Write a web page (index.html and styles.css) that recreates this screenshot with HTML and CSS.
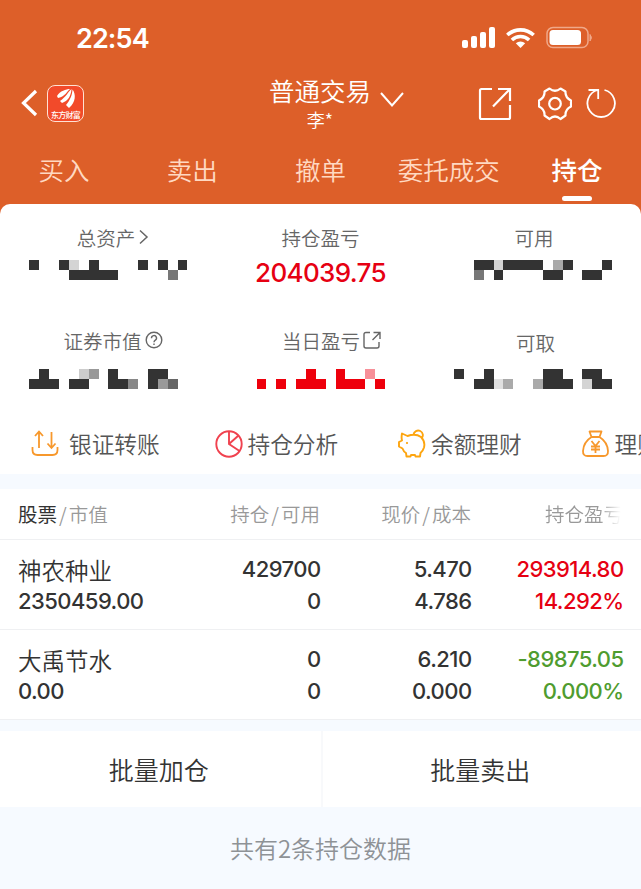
FILE: index.html
```html
<!DOCTYPE html>
<html lang="zh-CN">
<head>
    <meta charset="UTF-8">
    <meta name="viewport" content="width=device-width, initial-scale=1.0">
    <title>普通交易 - 持仓</title>
    <link rel="stylesheet" href="styles.css">
</head>
<body>
    <header class="header">
        <div class="status-bar">
            <span class="time">22:54</span>
            <svg class="status-icons" width="134" height="24" viewBox="0 0 134 24">
                <g fill="#fff">
                    <rect x="2" y="14" width="6" height="8" rx="2"/>
                    <rect x="11" y="10" width="6" height="12" rx="2"/>
                    <rect x="20" y="6" width="6" height="16" rx="2"/>
                    <rect x="29" y="1" width="6" height="21" rx="2"/>
                    <path d="M60.500 22l-4.700-4.700a7 7 0 0 1 9.400 0z"/>
                    <rect x="89.500" y="4" width="31.500" height="15" rx="3.500"/>
                </g>
                <path d="M47.300 9a19.500 19.500 0 0 1 26.400 0M51.900 14a12.500 12.500 0 0 1 17.200 0" fill="none" stroke="#fff" stroke-width="3.600"/>
                <rect x="87" y="1.500" width="41" height="20" rx="6" fill="none" stroke="#f0a889" stroke-width="1.500"/>
                <path d="M130 8.500q3 3 0 6.500z" fill="#f0a889" stroke="#f0a889"/>
            </svg>
        </div>
        <div class="nav-bar">
            <div class="nav-left">
                <svg width="18" height="30" viewBox="0 0 18 30"><path d="M16 3L3.500 15 16 27" fill="none" stroke="#fff" stroke-width="3.200"/></svg>
                <div class="app-logo">
                    <svg width="22" height="20" viewBox="0 0 22 20">
                        <path d="M2 8C5 3 11 1 15 1C11 4 11 8 3 10zM5 13C11 9 13 4 16.500 1C16 8 13 13 7 15zM11 17C15 12 17 8 17.500 1.500C21 6 21 14 14 20z" fill="#fff"/>
                    </svg>
                    <span>东方财富</span>
                </div>
            </div>
            <div class="nav-title">
                <h1>普通交易</h1>
                <p>李*</p>
            </div>
            <svg class="title-arrow" width="24" height="18" viewBox="0 0 24 18"><path d="M1 2l11 12.500L23 2" fill="none" stroke="#fff" stroke-width="2"/></svg>
            <div class="nav-actions">
                <svg width="34" height="36" viewBox="0 0 34 36" fill="none" stroke="#fff" stroke-width="2.200">
                    <path d="M14 3H3.500q-1.500 0-1.500 1.500v27q0 1.500 1.500 1.500h27q1.500 0 1.500-1.500V19M20 3h12v12M32 3L15 20.500"/>
                </svg>
                <svg width="34" height="36" viewBox="0 0 34 36" fill="none" stroke="#fff" stroke-width="2.200">
                    <path d="M11.500 2.500Q17 7 22.500 2.500L27.500 5.500Q27 11.500 33 14.500V20.500Q27 23.500 27.500 29.500L22.500 33Q17 28 11.500 33L6.500 29.500Q7 23.500 1 20.500V14.500Q7 11.500 6.500 5.500z" stroke-linejoin="round"/>
                    <circle cx="17" cy="17.700" r="5.800"/>
                </svg>
                <svg width="32" height="36" viewBox="0 0 32 36" fill="none" stroke="#fff" stroke-width="1.800">
                    <path d="M18.500 4A13.700 13.700 0 1 1 11.800 4M2.500 4h9.700v9"/>
                </svg>
            </div>
        </div>
        <nav class="tabs">
            <a>买入</a>
            <a>卖出</a>
            <a>撤单</a>
            <a>委托成交</a>
            <a class="active">持仓</a>
        </nav>
    </header>

    <section class="summary">
        <div class="summary-grid">
            <div class="cell shifted">
                <div class="label">总资产<svg width="11" height="16" viewBox="0 0 11 16"><path d="M2 1.500L9 8l-7 6.500" fill="none" stroke="#666" stroke-width="1.500"/></svg></div>
                <svg class="mosaic" viewBox="0 0 214 20">
                    <path d="M29 0h10v10H29zM59 0h10v10H59zM89 0h10v10H89zM138 0h10v10h-10zM158 0h10v10h-10zM178 0h9v10h-9zM69 10h49v10H69z" fill="#333"/>
                    <path d="M69 0h10v10H69z" fill="#d4d4d4"/><path d="M168 10h10v10h-10z" fill="#777"/>
                </svg>
            </div>
            <div class="cell">
                <div class="label">持仓盈亏</div>
                <div class="amount">204039.75</div>
            </div>
            <div class="cell">
                <div class="label">可用</div>
                <svg class="mosaic" viewBox="427 0 214 20">
                    <path d="M474 0h20v10h-20zM503 0h40v10h-40zM563 0h10v10h-10zM602 0h10v10h-10zM494 10h9v10h-9zM543 10h20v10h-20zM582 10h20v10h-20z" fill="#333"/>
                    <path d="M494 0h9v10h-9z" fill="#d4d4d4"/><path d="M553 0h10v10h-10z" fill="#aaa"/><path d="M474 10h10v10h-10z" fill="#777"/>
                </svg>
            </div>
            <div class="cell shifted">
                <div class="label">证券市值<svg width="18" height="18" viewBox="0 0 18 18" fill="none" stroke="#666" stroke-width="1.400"><circle cx="9" cy="9" r="7.800"/><path d="M6.500 7.200a2.500 2.500 0 1 1 3.800 2q-1.300.8-1.300 2M9 12.500v1.600"/></svg></div>
                <svg class="mosaic" viewBox="0 0 214 20">
                    <path d="M39 0h10v10H39zM108 0h10v10h-10zM148 0h20v10h-20zM29 10h30v10H29zM69 10h20v10H69zM108 10h20v10h-20zM148 10h10v10h-10z" fill="#333"/>
                    <path d="M79 0h10v10H79z" fill="#ccc"/><path d="M89 0h10v10H89zM158 10h10v10h-10z" fill="#999"/><path d="M128 10h10v10h-10z" fill="#888"/><path d="M168 10h10v10h-10z" fill="#666"/>
                </svg>
            </div>
            <div class="cell today">
                <div class="label">当日盈亏<svg width="18" height="18" viewBox="0 0 18 18" fill="none" stroke="#666" stroke-width="1.400"><path d="M7 1.500H3q-2 0-2 2V15q0 2 2 2h11q2 0 2-2v-4M10.500 1.500H17V8M16.500 2l-7 7"/></svg></div>
                <svg class="mosaic" viewBox="214 0 213 20">
                    <path d="M306 0h10v10h-10zM336 0h9v10h-9zM257 10h9v10h-9zM276 10h10v10h-10zM296 10h30v10h-30zM336 10h29v10h-29zM375 10h10v10h-10z" fill="#ee000c"/>
                    <path d="M365 0h10v10h-10z" fill="#f79099"/>
                </svg>
            </div>
            <div class="cell withdraw">
                <div class="label">可取</div>
                <svg class="mosaic" viewBox="427 0 214 20">
                    <path d="M454 0h10v10h-10zM484 0h10v10h-10zM543 0h20v10h-20zM582 0h20v10h-20zM474 10h20v10h-20zM543 10h30v10h-30zM592 10h20v10h-20z" fill="#333"/>
                    <path d="M494 10h9v10h-9z" fill="#e0e0e0"/><path d="M503 10h10v10h-10zM533 10h10v10h-10z" fill="#aaa"/><path d="M582 10h10v10h-10z" fill="#d4d4d4"/>
                </svg>
            </div>
        </div>
        <div class="shortcuts">
            <a>
                <svg width="30" height="30" viewBox="0 0 30 30" fill="none" stroke="#f7982c" stroke-width="1.800"><path d="M9 19V3M5 7l4-4.500L13 7M21.500 3v15.500M17.500 14.500l4 4.500 4-4.500M2.500 18v3q0 5 5 5h15q5 0 5-5v-3"/></svg>
                <span>银证转账</span>
            </a>
            <a>
                <svg width="30" height="30" viewBox="0 0 30 30" fill="none" stroke="#f0424f" stroke-width="1.900"><circle cx="15" cy="15" r="12.700"/><path d="M15 2.500V15l10.500 7M15 15l9.500-8.500"/></svg>
                <span>持仓分析</span>
            </a>
            <a>
                <svg width="30" height="30" viewBox="0 0 30 30" fill="none" stroke="#fda50f" stroke-width="1.900" stroke-linejoin="round"><path d="M5 4.500l5.500 2.500q8-3 13.500 1 4.500 4.500 3 10.500-1 3.500-3.500 5.500l-.5 3.500h-4.500l-.5-1.500h-4l-.5 1.500H9.500L9 24q-2.500-1.500-3.500-4.500l-3.500-2v-4.500l3-1.500q-.8-3 0-7zM16.500 5.500a4.700 4.700 0 1 1 8 4"/><circle cx="10" cy="14" r=".7" fill="#fda50f" stroke-width="1"/></svg>
                <span>余额理财</span>
            </a>
            <a>
                <svg width="30" height="30" viewBox="0 0 30 30" fill="none" stroke="#f7982c" stroke-width="1.800" stroke-linejoin="round"><path d="M8.500 2.500h12l-2 5.500h-8zM10.500 8Q2.500 13 2 22q-.2 5 4.500 5h16q4.700 0 4.500-5Q26.500 13 18.500 8M10.500 12l4 5 4-5M14.500 17v7M10 17.500h9M10 20.500h9"/></svg>
                <span>理财</span>
            </a>
        </div>
    </section>

    <section class="positions">
        <div class="row table-head">
            <div><b>股票</b><i>/</i>市值</div>
            <div>持仓<i>/</i>可用</div>
            <div>现价<i>/</i>成本</div>
            <div><span class="fade">持仓盈亏</span></div>
        </div>
        <div class="row stock">
            <div><strong>神农种业</strong><span>2350459.00</span></div>
            <div><span>429700</span><span>0</span></div>
            <div><span>5.470</span><span>4.786</span></div>
            <div class="up"><span>293914.80</span><span>14.292%</span></div>
        </div>
        <div class="row stock">
            <div><strong>大禹节水</strong><span>0.00</span></div>
            <div><span>0</span><span>0</span></div>
            <div><span>6.210</span><span>0.000</span></div>
            <div class="down"><span>-89875.05</span><span>0.000%</span></div>
        </div>
    </section>

    <div class="batch">
        <button>批量加仓</button>
        <button>批量卖出</button>
    </div>
    <footer class="footer">共有2条持仓数据</footer>
</body>
</html>
```
FILE: styles.css
```css
:root {
    --orange: #dd5f29;
    --page-bg: #f6faff;
    --text: #333;
    --grey: #666;
    --light-grey: #999;
    --red: #e60012;
    --green: #4f9c2f;
}
* {
    box-sizing: border-box;
}
body {
    margin: 0;
    height: 889px;
    overflow: hidden;
    background-color: var(--page-bg);
    color: var(--text);
    font-family: "Noto Sans CJK SC", sans-serif;
    font-weight: 350;
}
svg {
    display: block;
    flex-shrink: 0;
}
.header {
    height: 216px;
    background-color: var(--orange);
    color: #fff;
}
.status-bar {
    display: flex;
    justify-content: space-between;
    align-items: center;
    height: 76px;
    padding: 0 47px 0 76px;
}
.time {
    padding-top: 2px;
    font: 600 27px/32px Inter, sans-serif;
    letter-spacing: -.9px;
}
.nav-bar {
    display: grid;
    grid-template-columns: 269px 102px 109px 1fr;
    align-items: center;
    height: 60px;
}
.nav-left {
    display: flex;
    align-items: center;
    gap: 9px;
    padding: 0 0 6px 20px;
}
.app-logo {
    display: flex;
    flex-direction: column;
    align-items: center;
    width: 37px;
    height: 37px;
    padding-top: 2px;
    border: 1px solid #ffe1d3;
    border-radius: 8px;
    background-color: #f24a2a;
}
.app-logo span {
    font-size: 8px;
    line-height: 13px;
    font-weight: 500;
    white-space: nowrap;
    letter-spacing: -.7px;
}
.nav-title {
    margin-top: -6px;
    text-align: center;
}
.nav-title h1 {
    margin: 0;
    font-size: 25.500px;
    line-height: 33px;
    font-weight: 350;
    white-space: nowrap;
}
.nav-title p {
    margin: 0;
    font-size: 18px;
    line-height: 27px;
}
.title-arrow {
    margin: 0 0 12px 9px;
}
.nav-actions {
    display: flex;
    align-items: center;
    margin: 0 0 5px -2px;
}
.nav-actions svg:nth-child(2) {
    margin-left: 26px;
}
.nav-actions svg:nth-child(3) {
    margin-left: 14px;
}
.tabs {
    display: grid;
    grid-template-columns: repeat(5, 1fr);
    height: 68px;
    text-align: center;
    font-size: 25.500px;
    line-height: 66px;
}
.tabs a {
    color: #ffd9c2;
    white-space: nowrap;
}
.tabs .active {
    position: relative;
    color: #fff;
    font-weight: 500;
}
.tabs .active::after {
    content: "";
    position: absolute;
    left: 50%;
    bottom: 3px;
    width: 30px;
    height: 5px;
    margin-left: -15px;
    border-radius: 3px;
    background-color: #fff;
}
.summary {
    height: 270px;
    margin-top: -12px;
    border-radius: 10px 10px 0 0;
    background-color: #fff;
    overflow: hidden;
}
.summary-grid {
    display: grid;
    grid-template-columns: 214px 213px 214px;
    grid-template-rows: 109px 101px;
}
.cell {
    padding-top: 18px;
}
.label {
    display: flex;
    justify-content: center;
    align-items: center;
    gap: 3px;
    height: 30px;
    color: var(--grey);
    font-size: 19.500px;
}
.shifted .label {
    padding-left: 12px;
}
.today .label {
    padding-left: 22px;
}
.cell:nth-child(n+4) {
    padding-top: 12px;
}
.withdraw .label {
    padding: 5px 0 0 3px;
}
.mosaic {
    width: 100%;
    height: 20px;
    margin-top: 8px;
}
.cell:nth-child(n+4) .mosaic {
    margin-top: 14px;
}
.amount {
    padding-top: 5px;
    color: var(--red);
    font: 500 26px/32px Inter, sans-serif;
    letter-spacing: -.65px;
    text-align: center;
}
.shortcuts {
    display: flex;
    align-items: center;
    height: 60px;
    padding-left: 30px;
    color: #555;
    font-size: 22.700px;
    line-height: 58px;
}
.shortcuts a {
    display: flex;
    flex: 0 0 183.500px;
    align-items: center;
    gap: 4px;
    white-space: nowrap;
}
.shortcuts a:first-child span {
    margin-left: 5px;
}
.positions {
    margin-top: 15px;
    background-color: #fff;
}
.row {
    display: grid;
    grid-template-columns: 160px 142px 151px 152px;
    padding: 0 18px;
    border-bottom: 1px solid #eff0f2;
}
.row > div {
    text-align: right;
}
.row > div:first-child {
    text-align: left;
}
.table-head {
    height: 51px;
    color: var(--light-grey);
    font-size: 19.500px;
    line-height: 50px;
}
.table-head i {
    padding: 0 2px;
    font-style: normal;
}
.table-head b {
    color: var(--text);
    font-weight: 400;
}
.fade {
    -webkit-mask-image: linear-gradient(to right, #000 70%, transparent 97%);
    mask-image: linear-gradient(to right, #000 70%, transparent 97%);
}
.stock {
    height: 90px;
    padding-top: 13px;
    font: 500 22px/32px Inter, sans-serif;
    letter-spacing: -.55px;
}
.stock span,
.stock strong {
    display: block;
}
.stock div + div span {
    margin-right: -.55px;
}
.stock strong {
    height: 32px;
    font: 350 23.500px/35px "Noto Sans CJK SC", sans-serif;
    letter-spacing: 0;
}
.up {
    color: var(--red);
}
.down {
    color: var(--green);
}
.batch {
    display: grid;
    grid-template-columns: 1fr 1fr;
    height: 76px;
    margin-top: 11px;
    background-color: #fff;
}
.batch button {
    padding: 0 3px 0 0;
    border: 0;
    background: none;
    color: var(--text);
    font-family: inherit;
    font-size: 25px;
    font-weight: 350;
}
.batch button + button {
    border-left: 2px solid #f8f9fb;
}
.footer {
    color: #8e9296;
    font-size: 24px;
    line-height: 82px;
    text-align: center;
}
```
